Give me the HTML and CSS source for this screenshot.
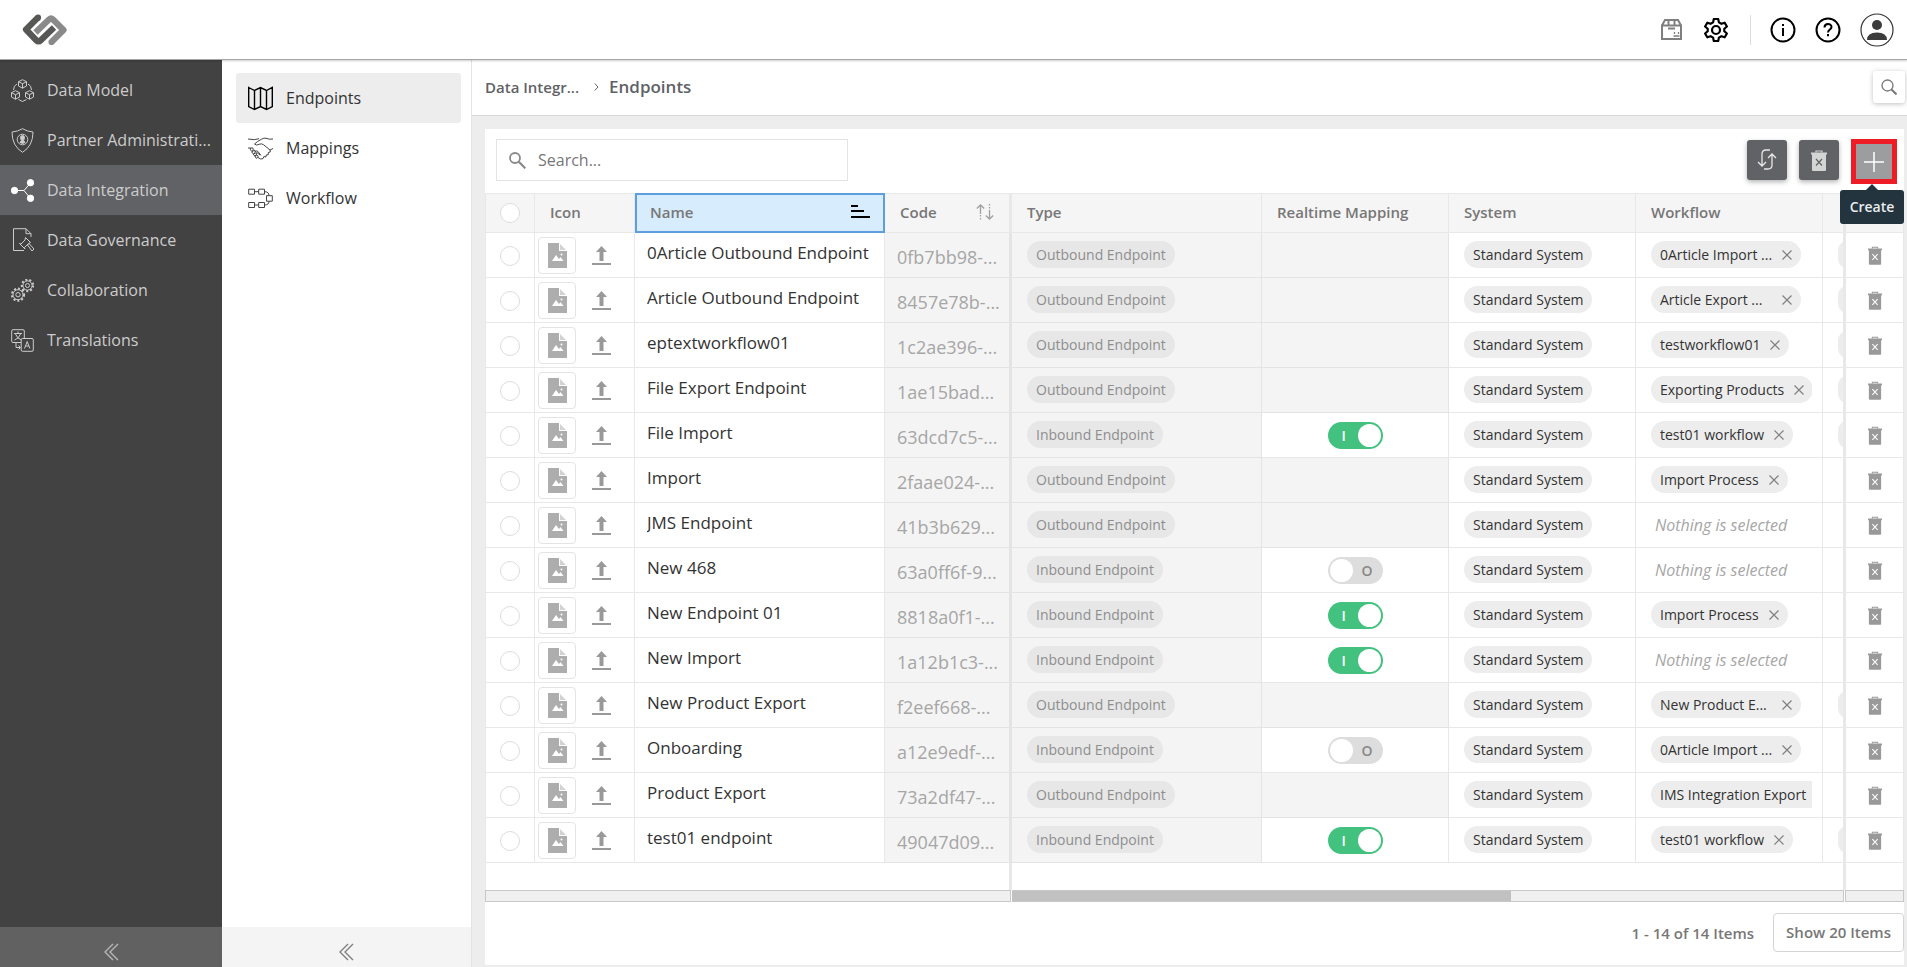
FILE: index.html
```html
<!DOCTYPE html>
<html lang="en">
<head>
    <meta charset="UTF-8">
    <meta name="viewport" content="width=device-width, initial-scale=1.0">
    <title>Endpoints</title>
    <link rel="stylesheet" href="styles.css">
</head>
<body>
    <!-- shared icons -->
    <svg class="sprite" aria-hidden="true">
        <symbol id="i-image" viewBox="0 0 19 25">
            <path fill="#adadad" d="M0 0h11v8h8v17H0z"/>
            <path fill="#adadad" d="M12 1l6 6h-6z" opacity=".55"/>
            <path fill="#fff" d="M4 18l4-6 3 4 1.500-2 3 4z"/>
            <circle cx="13.500" cy="11.500" r="1" fill="#fff"/>
        </symbol>
        <symbol id="i-upload" viewBox="0 0 19 19">
            <path fill="#999" d="M9.500 0l5.500 6h-3.500v9h-4V6H4zM0 17h19v2H0z"/>
        </symbol>
        <symbol id="i-trash" viewBox="0 0 16 21">
            <path fill="none" stroke="currentColor" stroke-width="1.200" d="M5 2.500V1h6v1.500"/>
            <path fill="currentColor" d="M0 2.500h16v2H0zM1 4.500h14V20q0 1-1 1H2q-1 0-1-1z"/>
            <path fill="none" stroke="var(--trash-x)" stroke-width="1.200" d="M5 9l6 6.500M11 9l-6 6.500"/>
        </symbol>
        <symbol id="i-close" viewBox="0 0 10 10">
            <path fill="none" stroke="#808080" stroke-width="1.200" d="M.5.5l9 9M9.500.5l-9 9"/>
        </symbol>
        <symbol id="i-collapse" viewBox="0 0 15 20">
            <path fill="none" stroke="currentColor" stroke-width="1.400" d="M9 2L1 10l8 8M14 2l-8 8 8 8"/>
        </symbol>
    </svg>

    <header class="topbar">
        <a href="#" class="logo" aria-label="Home">
            <svg width="46" height="32" viewBox="0 0 46 32" fill="none" stroke-width="6.200" stroke-linejoin="round">
                <path stroke="#8a8a8a" d="M13.500 18.500L27 5.500q2-2 4 0L41.500 16 30 27.500"/>
                <circle cx="29.500" cy="28" r="3.100" fill="#8a8a8a" stroke="none"/>
                <path stroke="#575756" d="M15.500 4L4 15.500 14.500 26.500q2 2 4 0L32 13.500"/>
                <circle cx="16" cy="3.700" r="3.100" fill="#575756" stroke="none"/>
            </svg>
        </a>
        <div class="top-actions">
            <button class="icon-btn box-btn" aria-label="Packages">
                <svg width="21" height="21" viewBox="0 0 21 21" fill="none" stroke="#7f7f7f" stroke-width="2">
                    <path d="M1 6.500h19V20H1zM1 6.500l3-5.500h13l3 5.500M7.500 1v5M13.500 1v5M7 9.500h7"/>
                    <path stroke-width="1.300" d="M12.500 17h6M13.500 15v-2M17.500 15v-2"/>
                </svg>
            </button>
            <button class="icon-btn gear-btn" aria-label="Settings">
                <svg width="26" height="26" viewBox="0 0 26 26" fill="none" stroke="#000" stroke-width="2.200" stroke-linejoin="round">
                    <path d="M10.800 2h4.400l.7 3.400 2.500 1.400 3.300-1.100 2.200 3.800-2.600 2.300v2.400l2.600 2.300-2.200 3.800-3.300-1.100-2.500 1.400-.7 3.400h-4.400l-.7-3.400-2.500-1.400-3.300 1.100-2.200-3.800 2.600-2.300v-2.400L2.100 9.500l2.200-3.800 3.300 1.100 2.500-1.400z"/>
                    <circle cx="13" cy="13" r="4"/>
                </svg>
            </button>
            <span class="separator"></span>
            <button class="icon-btn info-btn" aria-label="Information">
                <svg width="26" height="26" viewBox="0 0 26 26" fill="none" stroke="#000" stroke-width="2">
                    <circle cx="13" cy="13" r="11.500"/>
                    <path d="M13 11v8M13 7v2"/>
                </svg>
            </button>
            <button class="icon-btn help-btn" aria-label="Help">
                <svg width="26" height="26" viewBox="0 0 26 26" fill="none" stroke="#000" stroke-width="2">
                    <circle cx="13" cy="13" r="11.500"/>
                    <path d="M9.500 10.500c0-4.500 7-4.500 7-.5 0 2.500-3.500 2.500-3.500 5.500M13 17v2.200"/>
                </svg>
            </button>
            <button class="icon-btn" aria-label="Account">
                <svg width="34" height="34" viewBox="0 0 34 34">
                    <circle cx="17" cy="17" r="16" fill="none" stroke="#333" stroke-width="1.200"/>
                    <circle cx="17" cy="12" r="5" fill="#3c3c3c"/>
                    <path fill="#3c3c3c" d="M7 27q0-7.500 10-7.500T27 27z"/>
                </svg>
            </button>
        </div>
    </header>

    <div class="layout">
        <nav class="sidebar" aria-label="Main">
            <a href="#" class="side-item">
                <svg width="23" height="23" viewBox="0 0 23 23">
                    <path d="M11.500.7l4 2v4.300l-4 2.200-4-2.200V2.700zM7.500 2.700l4 2 4-2M11.500 4.700v4.500M4.500 11.700l4 2V18l-4 2.200-4-2.200v-4.300zM.5 13.700l4 2 4-2M4.500 15.700v4.500M18.500 11.700l4 2V18l-4 2.200-4-2.200v-4.300zM14.500 13.700l4 2 4-2M18.500 15.700v4.500M6 5Q2.500 6.500 2.500 11M17 5q3.500 1.500 3.500 6M7.500 20.500l4 2 4-2"/>
                </svg>
                <span>Data Model</span>
            </a>
            <a href="#" class="side-item">
                <svg width="23" height="25" viewBox="0 0 23 25">
                    <path d="M11.500.7Q16 3.500 22 4q0 14-10.500 20.300Q1 18 1 4q6-.5 10.500-3.300z"/>
                    <circle cx="11.500" cy="11.500" r="5.300"/>
                    <path class="solid" d="M11.500 7.500c-3 0-2 4-1 4.800L9 14.500q2.500 1.800 5 0l-1.500-2.200c1-.8 2-4.800-1-4.800z"/>
                </svg>
                <span>Partner Administrati...</span>
            </a>
            <a href="#" class="side-item active">
                <svg width="23" height="23" viewBox="0 0 23 23">
                    <path d="M4 11.500h9L19.500 4M13 11.500l6.500 8"/>
                    <g class="solid"><circle cx="3.500" cy="11.500" r="3.200"/><circle cx="19.500" cy="3.700" r="3.200"/><circle cx="19.500" cy="19.300" r="3.200"/></g>
                </svg>
                <span>Data Integration</span>
            </a>
            <a href="#" class="side-item">
                <svg width="23" height="24" viewBox="0 0 23 24">
                    <path d="M13 22.500H2.500V.7H15l5 5V9M15 .7v5h5M14.500 9.500l5 5-2 1-4 4 .5 1.500-5.500-5.500 1.500.5 4-4zM16.500 17l1.500-1.500 5 5.500-2 2z"/>
                </svg>
                <span>Data Governance</span>
            </a>
            <a href="#" class="side-item">
                <svg width="23" height="23" viewBox="0 0 23 23">
                    <circle cx="16.500" cy="6.500" r="4.600"/><circle cx="16.500" cy="6.500" r="2"/>
                    <circle class="teeth" cx="16.500" cy="6.500" r="5.700"/>
                    <circle cx="7" cy="15.700" r="5"/><circle cx="7" cy="15.700" r="2.200"/>
                    <circle class="teeth" cx="7" cy="15.700" r="6.100"/>
                </svg>
                <span>Collaboration</span>
            </a>
            <a href="#" class="side-item">
                <svg width="23" height="23" viewBox="0 0 23 23">
                    <path d="M10 13.500H2q-1.300 0-1.300-1.300V2Q.7.700 2 .7h10q1.300 0 1.300 1.300v7M11.500 9.500H21q1.300 0 1.300 1.300V21q0 1.300-1.300 1.300H11.500q-1.300 0-1.300-1.300V10.800q0-1.300 1.300-1.300zM3 4.500h8M7 2.500v2M4.500 5Q6 9.500 10.500 11M9.500 5Q8 9.500 3.500 11M5 14v4.500h4M7.500 16.500l2 2-2 2M13.500 19.500l2.700-7 2.700 7M14.500 17h3.500"/>
                </svg>
                <span>Translations</span>
            </a>
            <button class="collapse" aria-label="Collapse main menu"><svg width="15" height="20"><use href="#i-collapse"/></svg></button>
        </nav>

        <nav class="subnav" aria-label="Data Integration">
            <a href="#" class="sub-item active">
                <svg width="25" height="25" viewBox="0 0 25 25">
                    <path d="M.7 1.500l5.800 3 6-3 6 3 5.800-3v19l-5.800 3-6-3-6 3-5.800-3zM6.500 4.500v19M12.500 1.500v19M18.500 4.500v19"/>
                </svg>
                <span>Endpoints</span>
            </a>
            <a href="#" class="sub-item">
                <svg width="25" height="25" viewBox="0 0 25 25">
                    <path d="M0 3q7 1.500 11-.3M25 3q-4 .8-7-.8-2-.5-4.500 1Q9 5.500 6.500 8q1.500 2 5 .2 2-.9 4 .5L22 14M25 12.500l-3 1.500.3 2-2 .5v2.200l-2 .2-.3 2-2.200-.3-.8 2L12.500 23 10 21.500M0 12h2.500L5 12q1 2-1 3.500M2.500 12q-1 2 1.500 3.500Q6 14 7.500 15 7 17 5.500 18M4 15.500q-.5 1.500 1.500 2.500 2-1.500 3.300-.5-.3 1.800-1.800 2.500M5.500 18q0 1.500 1.500 2 1.500-1 3-.2.500 1.500-1 2.500Q7 22 7 20M6 14l6 5M8.500 14.500q2 1 4.500 5"/>
                </svg>
                <span>Mappings</span>
            </a>
            <a href="#" class="sub-item">
                <svg width="25" height="25" viewBox="0 0 25 25">
                    <path d="M.7 3.200h5.800v5H.7zM10.700 3.200h5.800v5h-5.800zM6.500 5.700h4.200M.7 16.500h5.800v5H.7zM10.700 16.500h5.800v5h-5.800zM6.500 19h4.200M18.500 9.700h5.800v5.500h-5.800zM16.500 5.700q4.500 0 4.500 4M21 15.200Q21 19 16.500 19"/>
                </svg>
                <span>Workflow</span>
            </a>
            <button class="collapse" aria-label="Collapse submenu"><svg width="15" height="20"><use href="#i-collapse"/></svg></button>
        </nav>

        <main class="main">
            <div class="crumb-bar">
                <div class="crumbs">
                    <a href="#">Data Integr...</a>
                    <svg width="5" height="8" viewBox="0 0 5 8"><path fill="none" stroke="#666" d="M.7.500L4 4 .7 7.500"/></svg>
                    <h1>Endpoints</h1>
                </div>
                <button class="page-search" aria-label="Search page">
                    <svg width="16" height="16" viewBox="0 0 16 16" fill="none" stroke="#777" stroke-width="1.300">
                        <circle cx="6.500" cy="6.500" r="5.500"/><path stroke-width="2" d="M10.500 10.500l5 5"/>
                    </svg>
                </button>
            </div>

            <div class="content">
                <section class="card">
                    <div class="toolbar">
                        <label class="search">
                            <svg width="17" height="17" viewBox="0 0 17 17" fill="none" stroke="#8a8a8a" stroke-width="1.800">
                                <circle cx="6" cy="6" r="5"/><path stroke-width="2.200" d="M9.800 9.800l6.500 6.500"/>
                            </svg>
                            <input type="text" placeholder="Search..." aria-label="Search">
                        </label>
                        <div class="tools">
                            <button class="tool" aria-label="Refresh">
                                <svg width="20" height="22" viewBox="0 0 20 22" fill="none" stroke="#e8e8e8" stroke-width="1.300">
                                    <path d="M13 1H9Q5 1 5 5v12M1 13l4 4 4-4M7 20h4q4 0 4-4V5M11 9l4-4 4 4"/>
                                </svg>
                            </button>
                            <button class="tool" aria-label="Delete"><svg width="16" height="21"><use href="#i-trash"/></svg></button>
                            <div class="create-wrap">
                                <button class="create" aria-label="Create">
                                    <svg width="20" height="20" viewBox="0 0 20 20"><path fill="none" stroke="#fff" stroke-width="1.500" d="M10 0v20M0 10h20"/></svg>
                                </button>
                                <span class="tooltip" role="tooltip">Create</span>
                            </div>
                        </div>
                    </div>

                    <table class="grid">
                        <colgroup>
                            <col class="c-select"><col class="c-icon"><col class="c-name"><col class="c-code">
                            <col class="c-type"><col class="c-wide"><col class="c-wide"><col class="c-wide">
                            <col class="c-next"><col class="c-delete">
                        </colgroup>
                        <thead>
                            <tr>
                                <th class="select"><input type="checkbox" class="round" aria-label="Select all"></th>
                                <th>Icon</th>
                                <th class="sorted">
                                    <div class="th-inner">Name
                                        <svg width="19" height="13" viewBox="0 0 19 13"><path fill="#000" d="M0 0h7v2H0zM0 5h13v2H0zM0 11h19v2H0z"/></svg>
                                    </div>
                                </th>
                                <th class="pinned">
                                    <div class="th-inner">Code
                                        <svg width="18" height="16" viewBox="0 0 18 16" fill="none" stroke="#a0a0a0" stroke-width="1.300">
                                            <path d="M4.500 10V1M.8 4.500L4.500 1l3.700 3.500M13.500 6v9M9.800 11.500l3.700 3.500 3.700-3.500"/>
                                            <path stroke-dasharray="1.500 1.500" d="M4.500 11v5M13.500 0v5"/>
                                        </svg>
                                    </div>
                                </th>
                                <th>Type</th>
                                <th>Realtime Mapping</th>
                                <th>System</th>
                                <th>Workflow</th>
                                <th class="pinned"></th>
                                <th></th>
                            </tr>
                        </thead>
                        <tbody id="rows"></tbody>
                        <tfoot>
                            <tr>
                                <td colspan="4" class="pinned"></td>
                                <td colspan="5" class="pinned"></td>
                                <td></td>
                            </tr>
                        </tfoot>
                    </table>

                    <div class="scrollbars">
                        <div class="track left"></div>
                        <div class="track middle"><div class="thumb"></div></div>
                        <div class="track right"></div>
                    </div>

                    <div class="pager">
                        <span>1 - 14 of 14 Items</span>
                        <button class="page-size">Show 20 Items</button>
                    </div>
                </section>
            </div>
        </main>
    </div>

    <script>
        // name, code, direction, realtime (true / false / null = not available), workflow, next column
        const endpoints = [
            ['0Article Outbound Endpoint', '0fb7bb98-...', 'Outbound', null, '0Article Import ...', 'chip'],
            ['Article Outbound Endpoint', '8457e78b-...', 'Outbound', null, 'Article Export ...', 'chip'],
            ['eptextworkflow01', '1c2ae396-...', 'Outbound', null, 'testworkflow01', 'chip'],
            ['File Export Endpoint', '1ae15bad...', 'Outbound', null, 'Exporting Products', 'chip'],
            ['File Import', '63dcd7c5-...', 'Inbound', true, 'test01 workflow', 'chip'],
            ['Import', '2faae024-...', 'Outbound', null, 'Import Process', ''],
            ['JMS Endpoint', '41b3b629...', 'Outbound', null, '', ''],
            ['New 468', '63a0ff6f-9...', 'Inbound', false, '', ''],
            ['New Endpoint 01', '8818a0f1-...', 'Inbound', true, 'Import Process', ''],
            ['New Import', '1a12b1c3-...', 'Inbound', true, '', ''],
            ['New Product Export', 'f2eef668-...', 'Outbound', null, 'New Product E...', 'chip'],
            ['Onboarding', 'a12e9edf-...', 'Inbound', false, '0Article Import ...', ''],
            ['Product Export', '73a2df47-...', 'Outbound', null, 'IMS Integration Export', ''],
            ['test01 endpoint', '49047d09...', 'Inbound', true, 'test01 workflow', 'chip']
        ];

        function toggle(on, name) {
            if (on === null) return '';
            return `<label class="toggle"><input type="checkbox" aria-label="Realtime mapping ${name}" ${on ? 'checked' : ''}><span>${on ? 'I' : 'O'}</span></label>`;
        }

        function workflowCell(workflow) {
            if (!workflow) return '<span class="empty">Nothing is selected</span>';
            const cut = workflow.endsWith('...') ? ' cut' : '';
            return `<div class="chips"><span class="chip"><span class="chip-label${cut}">${workflow}</span><button class="chip-remove" aria-label="Remove ${workflow}"><svg width="10" height="10"><use href="#i-close"/></svg></button></span></div>`;
        }

        document.getElementById('rows').innerHTML = endpoints.map(([name, code, type, realtime, workflow, next]) => `
            <tr>
                <td class="select"><input type="checkbox" class="round" aria-label="Select ${name}"></td>
                <td class="icon-cell"><div class="icon-tools">
                    <span class="thumbnail"><svg width="19" height="25"><use href="#i-image"/></svg></span>
                    <button class="icon-btn" aria-label="Upload icon"><svg width="19" height="19"><use href="#i-upload"/></svg></button>
                </div></td>
                <td class="name"><div>${name}</div></td>
                <td class="code readonly pinned">${code}</td>
                <td class="readonly"><span class="chip muted">${type} Endpoint</span></td>
                <td class="realtime ${realtime === null ? 'readonly' : ''}">${toggle(realtime, name)}</td>
                <td><span class="chip">Standard System</span></td>
                <td>${workflowCell(workflow)}</td>
                <td class="pinned next">${next ? '<span class="chip"></span>' : ''}</td>
                <td class="delete"><button class="icon-btn" aria-label="Delete ${name}"><svg width="14" height="19"><use href="#i-trash"/></svg></button></td>
            </tr>`).join('');
    </script>
</body>
</html>
```

FILE: styles.css
```css
* {
    box-sizing: border-box;
}
body {
    margin: 0;
    min-height: 100vh;
    display: flex;
    flex-direction: column;
    font-family: "Open Sans", "Liberation Sans", sans-serif;
    font-size: 16px;
    color: #333;
    background-color: #ededed;
}
a {
    color: inherit;
    text-decoration: none;
}
button, input {
    font-family: inherit;
    padding: 0;
    border: none;
}
button {
    background: none;
    cursor: pointer;
}
svg {
    display: block;
    flex: none;
}
.sprite {
    position: absolute;
    width: 0;
    height: 0;
}

/* top bar */
.topbar {
    height: 60px;
    padding: 0 13px 0 22px;
    display: flex;
    align-items: center;
    justify-content: space-between;
    background-color: #fff;
    border-bottom: 1px solid #a6a6a6;
    box-shadow: 0 1px 2px rgba(0,0,0,0.2);
    position: relative;
    z-index: 1;
}
.top-actions {
    display: flex;
    align-items: center;
}
.icon-btn {
    display: inline-flex;
}
.box-btn {
    margin-right: 21px;
}
.gear-btn {
    margin-right: 21px;
}
.separator {
    width: 1px;
    height: 30px;
    margin-right: 19px;
    background-color: #ddd;
}
.info-btn {
    margin-right: 19px;
}
.help-btn {
    margin-right: 19px;
}

/* menus */
.layout {
    flex: 1;
    display: flex;
}
.sidebar {
    width: 222px;
    flex: none;
    display: flex;
    flex-direction: column;
    padding-top: 5px;
    background-color: #424242;
    color: #ccc;
}
.side-item {
    height: 50px;
    padding-left: 11px;
    display: flex;
    align-items: center;
    gap: 13px;
    white-space: nowrap;
}
.side-item svg {
    fill: none;
    stroke: currentColor;
    stroke-width: 1;
}
.side-item .solid {
    fill: currentColor;
}
.side-item .teeth {
    stroke-width: 2;
    stroke-dasharray: 2 2;
}
.side-item.active {
    background-color: #616266;
}
.side-item.active svg {
    color: #fff;
}
.collapse {
    height: 40px;
    margin-top: auto;
    padding-top: 10px;
    display: flex;
    align-items: center;
    justify-content: center;
    background-color: #616161;
    color: #b5b5b5;
}
.subnav {
    width: 250px;
    flex: none;
    display: flex;
    flex-direction: column;
    padding-top: 13px;
    background-color: #fff;
    border-right: 1px solid #e4e4e4;
}
.sub-item {
    height: 50px;
    margin: 0 10px 0 14px;
    padding-left: 12px;
    display: flex;
    align-items: center;
    gap: 13px;
    border-radius: 3px;
}
.sub-item svg {
    fill: none;
    stroke: #444;
    stroke-width: 1;
}
.sub-item.active {
    background-color: #ededed;
}
.sub-item.active svg {
    stroke: #000;
    stroke-width: 1.4;
}
.subnav .collapse {
    background-color: #f4f4f4;
    color: #808080;
}

/* page head */
.main {
    flex: 1;
    min-width: 0;
    display: flex;
    flex-direction: column;
}
.crumb-bar {
    height: 56px;
    padding: 0 2px 2px 13px;
    display: flex;
    align-items: center;
    justify-content: space-between;
    background-color: #fff;
    border-bottom: 1px solid #d8d8d8;
}
.crumbs {
    display: flex;
    align-items: center;
    color: #606266;
    font-weight: 600;
    font-size: 15px;
}
.crumbs svg {
    margin: 0 10px 0 15px;
}
.crumbs h1 {
    margin: 0;
    font-size: 17px;
    font-weight: 600;
}
.page-search {
    width: 32px;
    height: 32px;
    display: flex;
    align-items: center;
    justify-content: center;
    background-color: #fff;
    border-radius: 3px;
    box-shadow: 0 1px 5px rgba(0,0,0,0.25);
}
.content {
    flex: 1;
    display: flex;
    padding: 13px 3px 2px 13px;
}
.card {
    flex: 1;
    min-width: 0;
    background-color: #fff;
}

/* toolbar */
.toolbar {
    height: 64px;
    padding: 10px 7px 0 11px;
    display: flex;
    justify-content: space-between;
}
.search {
    width: 352px;
    height: 42px;
    padding-left: 12px;
    display: flex;
    align-items: center;
    gap: 12px;
    border: 1px solid #e4e4e4;
}
.search input {
    flex: 1;
    font-size: 16px;
    outline: none;
}
.search input::placeholder {
    color: #777;
}
.tools {
    display: flex;
    align-items: flex-start;
    gap: 12px;
}
.tool {
    width: 40px;
    height: 40px;
    margin-top: 1px;
    display: flex;
    align-items: center;
    justify-content: center;
    background-color: #616266;
    color: #d4d4d4;
    border-radius: 3px;
    box-shadow: 0 2px 5px rgba(0,0,0,0.3);
    --trash-x: #616266;
}
.create-wrap {
    position: relative;
}
.create {
    width: 46px;
    height: 45px;
    display: flex;
    align-items: center;
    justify-content: center;
    background-color: #9c9d9f;
    border: 5px solid #ee1c25;
}
.tooltip {
    position: absolute;
    top: 51px;
    right: -7px;
    width: 64px;
    height: 34px;
    line-height: 34px;
    text-align: center;
    font-size: 14px;
    font-weight: 600;
    color: #e8ecee;
    background-color: #23343e;
    border-radius: 3px;
    z-index: 2;
}
.tooltip::before {
    content: "";
    position: absolute;
    top: -6px;
    left: 25px;
    border: 7px solid transparent;
    border-top: none;
    border-bottom-color: #23343e;
}

/* grid */
.grid {
    width: 100%;
    table-layout: fixed;
    border-collapse: separate;
    border-spacing: 0;
    border-left: 1px solid #e8e8e8;
}
.c-select {
    width: 49px;
}
.c-icon {
    width: 100px;
}
.c-name {
    width: 250px;
}
.c-code {
    width: 127px;
}
.c-wide {
    width: 187px;
}
.c-next {
    width: 23px;
}
.c-delete {
    width: 58px;
}
.grid th {
    height: 40px;
    padding: 0 15px 3px;
    text-align: left;
    font-size: 15px;
    font-weight: 600;
    color: #777;
    background-color: #f5f5f5;
    border: solid #e8e8e8;
    border-width: 1px 1px 1px 0;
    white-space: nowrap;
}
.grid td {
    height: 45px;
    padding: 0 10px 1px 15px;
    border: solid #e8e8e8;
    border-width: 0 1px 1px 0;
    white-space: nowrap;
    overflow: hidden;
}
.grid th.pinned, .grid td.pinned {
    border-right-width: 3px;
}
.grid th.select, .grid td.select {
    padding: 0 0 1px;
    text-align: center;
}
.grid th.sorted {
    padding: 0 13px 3px;
    background-color: #d7ecfd;
    border: 2px solid #5b9fe0;
}
.th-inner {
    display: flex;
    align-items: center;
    justify-content: space-between;
}
.round {
    appearance: none;
    width: 20px;
    height: 20px;
    margin: 0;
    display: inline-block;
    vertical-align: middle;
    background-color: #fff;
    border: 1px solid #ddd;
    border-radius: 50%;
}
.grid .icon-cell {
    padding: 0 0 0 3px;
}
.icon-tools {
    display: flex;
    align-items: center;
    gap: 16px;
}
.thumbnail {
    width: 38px;
    height: 37px;
    display: flex;
    align-items: center;
    justify-content: center;
    border: 1px solid #e4e4e4;
    border-radius: 4px;
}
.grid .name {
    padding: 0 12px 6px 12px;
    font-size: 17px;
}
.name div {
    overflow: hidden;
}
.grid .readonly {
    background-color: #f4f4f4;
    border-color: #e4e4e4;
}
.grid .code {
    padding: 3px 0 0 12px;
    font-size: 18px;
    color: #a6a6a6;
}
.chip {
    height: 27px;
    padding: 0 9px;
    display: inline-flex;
    align-items: center;
    vertical-align: middle;
    font-size: 14px;
    background-color: #ededed;
    border-radius: 14px;
}
.chip.muted {
    background-color: #e7e7e7;
    color: #8e8e8e;
}
.chips {
    width: 161px;
    overflow: hidden;
    display: flex;
}
.chips .chip {
    flex: none;
}
.chip-label.cut {
    width: 112px;
}
.chip-remove {
    margin-left: 10px;
}
.empty {
    padding-left: 4px;
    font-size: 16px;
    font-style: italic;
    color: #a6a6a6;
}
.grid .realtime {
    padding: 0;
    text-align: center;
}
.toggle {
    display: inline-grid;
    vertical-align: middle;
    font-size: 14px;
}
.toggle input {
    appearance: none;
    grid-area: 1 / 1;
    width: 55px;
    height: 27px;
    margin: 0;
    padding: 2px;
    border-radius: 14px;
    background-color: #ddd;
}
.toggle input::before {
    content: "";
    display: block;
    width: 23px;
    height: 23px;
    border-radius: 50%;
    background-color: #fff;
}
.toggle input:checked {
    background-color: #43c17e;
}
.toggle input:checked::before {
    margin-left: auto;
}
.toggle span {
    grid-area: 1 / 1;
    align-self: center;
    justify-self: end;
    padding-right: 10px;
    font-weight: 600;
    color: #888;
    pointer-events: none;
}
.toggle input:checked + span {
    justify-self: start;
    padding: 0 0 0 14px;
    color: #fff;
}
.grid .next {
    padding: 0 0 1px 15px;
}
.grid .delete {
    padding: 0 0 2px;
    text-align: center;
    color: #999;
    --trash-x: #fff;
}
.delete .icon-btn {
    color: inherit;
    vertical-align: middle;
}
.grid tfoot td {
    height: 27px;
    padding: 0;
    border-bottom: none;
}

/* scrollbars under the three panes */
.scrollbars {
    display: flex;
    gap: 1px;
}
.track {
    height: 12px;
    background-color: #f0f0f0;
    border: 1px solid #c8c8c8;
}
.track.left {
    width: 526px;
}
.track.middle {
    flex: 1;
    border-left: none;
}
.track.right {
    width: 59px;
}
.thumb {
    width: 60%;
    height: 10px;
    background-color: #c1c1c1;
}
.pager {
    padding: 11px 0 12px 0;
    display: flex;
    align-items: center;
    justify-content: flex-end;
    gap: 19px;
    font-size: 15px;
    font-weight: 600;
    color: #777;
}
.page-size {
    height: 39px;
    padding: 0 12px 2px;
    font-size: 15px;
    font-weight: 600;
    color: #777;
    border: 1px solid #d4d4d4;
    border-radius: 4px;
}
```
